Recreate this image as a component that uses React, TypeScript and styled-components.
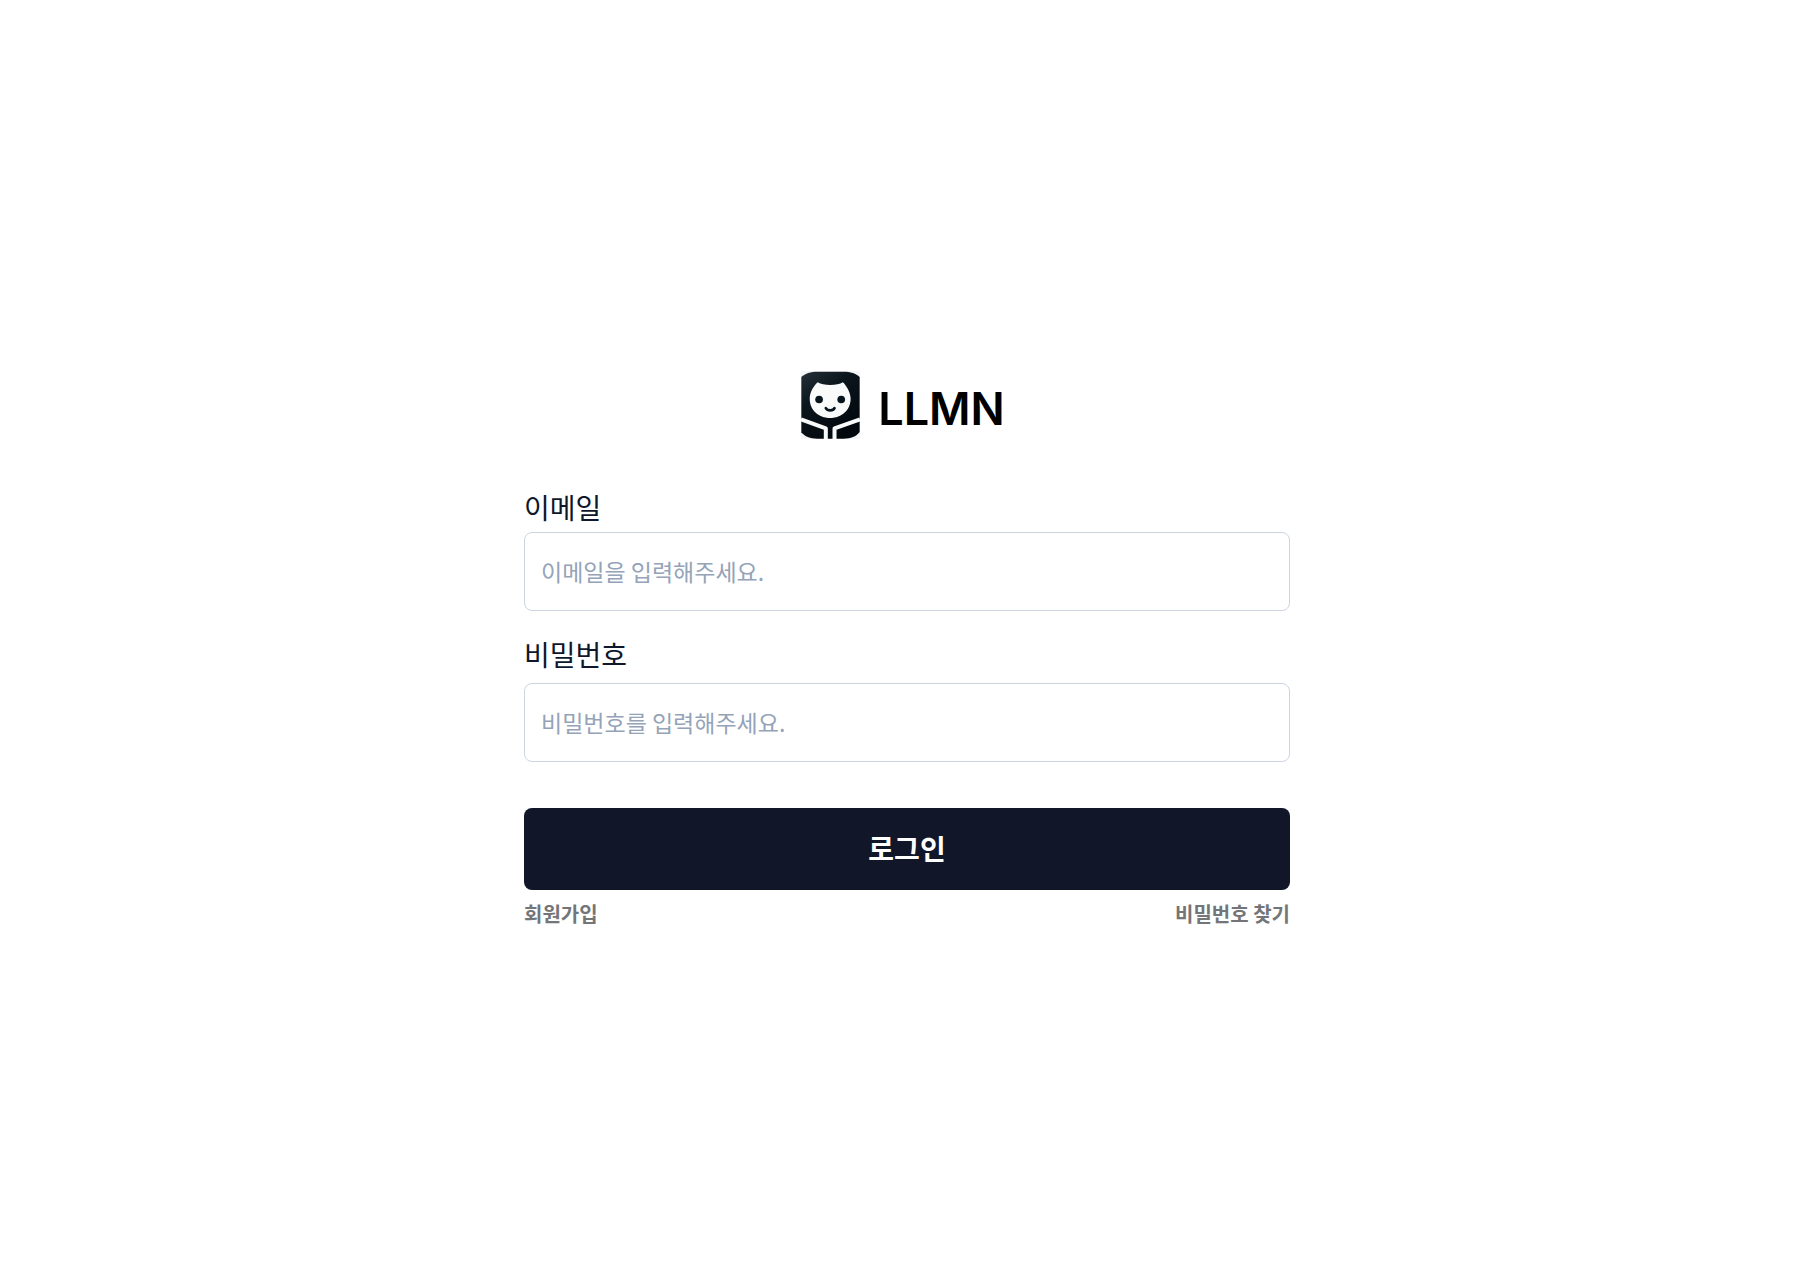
import React from "react";
import styled, { createGlobalStyle } from "styled-components";

const GlobalStyle = createGlobalStyle`
  *, *::before, *::after { box-sizing: border-box; }
  body {
    margin: 0;
    background: #ffffff;
    color: #0f172a;
    font-family: "Noto Sans CJK KR", "Noto Sans", sans-serif;
  }
`;

const Page = styled.main`
  display: flex;
  flex-direction: column;
  align-items: center;
  justify-content: center;
  min-height: 100vh;
  padding: 10px 0 0 2px;
`;

const Panel = styled.div`
  display: flex;
  flex-direction: column;
  width: 100%;
  max-width: 766px;
`;

const Brand = styled.header`
  display: flex;
  align-items: center;
  align-self: center;
  gap: 18px;
  margin-right: 8px;
`;

const Mark = styled.svg`
  display: block;
  width: 59px;
  height: 68px;
`;

const BrandName = styled.h1`
  margin: 0;
  padding-top: 8px;
  color: #000000;
  font: 600 45px/56px Inter, sans-serif;
`;

const Form = styled.form`
  display: flex;
  flex-direction: column;
  margin-top: 48px;
`;

const Field = styled.div<{ $gap: number }>`
  display: flex;
  flex-direction: column;
  gap: ${({ $gap }) => $gap}px;
  margin-bottom: 23px;
`;

const Label = styled.label`
  font-size: 28px;
  line-height: 40px;
`;

const Input = styled.input`
  width: 100%;
  height: 79px;
  padding: 0 16px;
  border: 1px solid #cbd5e1;
  border-radius: 8px;
  background: #ffffff;
  color: #0f172a;
  font-family: inherit;
  font-size: 23px;

  &::placeholder {
    color: #94a3b8;
    opacity: 1;
  }
`;

const SubmitButton = styled.button`
  height: 82px;
  margin-top: 23px;
  padding: 0 0 2px;
  border: 0;
  border-radius: 8px;
  background: #111729;
  color: #ffffff;
  font-family: inherit;
  font-size: 28px;
  font-weight: 700;
  cursor: pointer;
`;

const Links = styled.nav`
  display: flex;
  justify-content: space-between;
  margin-top: 10px;
`;

const TextLink = styled.a`
  color: #737578;
  font-size: 20px;
  font-weight: 700;
  line-height: 28px;
  text-decoration: none;
`;

function Logo() {
  return (
    <Mark viewBox="34 32 176 205" preserveAspectRatio="none" aria-hidden="true">
      <defs>
        <linearGradient id="hood" x1="0" y1="0" x2="0.6" y2="1">
          <stop offset="0" stopColor="#263038" />
          <stop offset="0.4" stopColor="#0b151c" />
          <stop offset="1" stopColor="#02090e" />
        </linearGradient>
      </defs>
      <rect x="34" y="32" width="176" height="205" fill="#f3f5f6" />
      <path
        d="M35 50C47 39 62 34 84 34H160C182 34 198 39 209 50V216C199 230 182 236 162 236H82C61 236 45 230 35 217Z"
        fill="url(#hood)"
      />
      <path
        d="M84 66C100 77 143 77 159 66C171 78 182 98 182 116C182 150 156 174 121 174C86 174 60 150 60 116C60 98 70 78 84 66Z"
        fill="#f9fafa"
      />
      <circle cx="88" cy="118" r="11.5" fill="#07141b" />
      <circle cx="154" cy="118" r="11.5" fill="#07141b" />
      <path d="M108 144C113 153 130 153 134 144" fill="none" stroke="#07141b" strokeWidth="8" strokeLinecap="round" />
      <path
        d="M34 178L108 205V238M210 178L134 205V238"
        fill="none"
        stroke="#f9fafa"
        strokeWidth="12"
        strokeLinejoin="round"
      />
    </Mark>
  );
}

export default function App() {
  return (
    <>
      <GlobalStyle />
      <Page>
        <Panel>
          <Brand>
            <Logo />
            <BrandName>LLMN</BrandName>
          </Brand>
          <Form onSubmit={(event: React.FormEvent) => event.preventDefault()}>
            <Field $gap={5}>
              <Label htmlFor="email">이메일</Label>
              <Input id="email" type="email" placeholder="이메일을 입력해주세요." />
            </Field>
            <Field $gap={9}>
              <Label htmlFor="password">비밀번호</Label>
              <Input id="password" type="password" placeholder="비밀번호를 입력해주세요." />
            </Field>
            <SubmitButton type="submit">로그인</SubmitButton>
          </Form>
          <Links>
            <TextLink href="#signup">회원가입</TextLink>
            <TextLink href="#find-password">비밀번호 찾기</TextLink>
          </Links>
        </Panel>
      </Page>
    </>
  );
}
